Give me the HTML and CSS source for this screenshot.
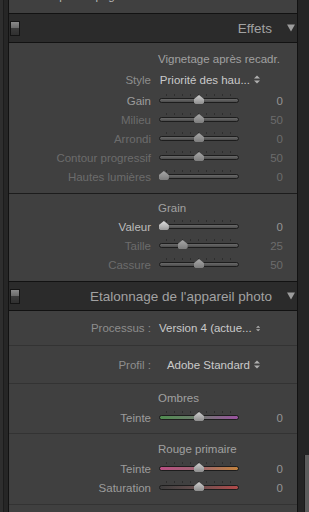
FILE: index.html
```
<!DOCTYPE html>
<html>
<head>
  <title>Développement</title>
  <link rel="stylesheet" href="styles.css">
</head>
<body>
  <div class="app">
    <div class="gutter-left"></div>

    <div class="column">
      <div class="panel panel-cut">
        <p class="cut-text">l'option Upright.</p>
      </div>

      <div class="header">
        <span class="toggle"></span>
        <span class="header-title">Effets</span>
        <svg class="caret" width="8" height="8" viewBox="0 0 8 8"><polygon points="0,0.5 8,0.5 4,7.5"/></svg>
      </div>

      <div class="panel">
        <div class="section sec-vignette">
          <div class="title">Vignetage après recadr.</div>
          <div class="row row-style">
            <span class="label">Style</span>
            <span class="popup">Priorité des hau...
              <svg width="6" height="9" viewBox="0 0 6 9"><polygon points="0,3.5 3,0.5 6,3.5"/><polygon points="0,5.5 3,8.5 6,5.5"/></svg>
            </span>
          </div>
          <div class="row">
            <span class="label">Gain</span>
            <span class="slider"><span class="thumb" style="left: 50%"></span></span>
            <span class="value">0</span>
          </div>
          <div class="row dim">
            <span class="label">Milieu</span>
            <span class="slider"><span class="thumb" style="left: 50%"></span></span>
            <span class="value">50</span>
          </div>
          <div class="row dim">
            <span class="label">Arrondi</span>
            <span class="slider"><span class="thumb" style="left: 50%"></span></span>
            <span class="value">0</span>
          </div>
          <div class="row dim">
            <span class="label">Contour progressif</span>
            <span class="slider"><span class="thumb" style="left: 50%"></span></span>
            <span class="value">50</span>
          </div>
          <div class="row dim">
            <span class="label">Hautes lumières</span>
            <span class="slider"><span class="thumb" style="left: 5%"></span></span>
            <span class="value">0</span>
          </div>
        </div>

        <div class="section sec-grain">
          <div class="title">Grain</div>
          <div class="row active">
            <span class="label">Valeur</span>
            <span class="slider"><span class="thumb" style="left: 5%"></span></span>
            <span class="value">0</span>
          </div>
          <div class="row dim">
            <span class="label">Taille</span>
            <span class="slider"><span class="thumb" style="left: 29%"></span></span>
            <span class="value">25</span>
          </div>
          <div class="row dim">
            <span class="label">Cassure</span>
            <span class="slider"><span class="thumb" style="left: 50%"></span></span>
            <span class="value">50</span>
          </div>
        </div>
      </div>

      <div class="header">
        <span class="toggle"></span>
        <span class="header-title">Etalonnage de l'appareil photo</span>
        <svg class="caret" width="8" height="8" viewBox="0 0 8 8"><polygon points="0,0.5 8,0.5 4,7.5"/></svg>
      </div>

      <div class="panel">
        <div class="section sec-process">
          <div class="row row-process">
            <span class="label">Processus :</span>
            <span class="popup">Version 4 (actue...
              <svg width="6" height="9" viewBox="0 0 6 9"><polygon points="0,3.5 3,0.5 6,3.5"/><polygon points="0,5.5 3,8.5 6,5.5"/></svg>
            </span>
          </div>
        </div>

        <div class="section sec-profile soft">
          <div class="row row-profile">
            <span class="label">Profil :</span>
            <span class="popup">Adobe Standard
              <svg width="6" height="9" viewBox="0 0 6 9"><polygon points="0,3.5 3,0.5 6,3.5"/><polygon points="0,5.5 3,8.5 6,5.5"/></svg>
            </span>
          </div>
        </div>

        <div class="section sec-shadows soft">
          <div class="title">Ombres</div>
          <div class="row">
            <span class="label">Teinte</span>
            <span class="slider track-green"><span class="thumb" style="left: 50%"></span></span>
            <span class="value">0</span>
          </div>
        </div>

        <div class="section sec-red soft">
          <div class="title">Rouge primaire</div>
          <div class="row">
            <span class="label">Teinte</span>
            <span class="slider track-hue-red"><span class="thumb" style="left: 50%"></span></span>
            <span class="value">0</span>
          </div>
          <div class="row">
            <span class="label">Saturation</span>
            <span class="slider track-sat-red"><span class="thumb" style="left: 50%"></span></span>
            <span class="value">0</span>
          </div>
        </div>

        <div class="section soft sec-rest"></div>
      </div>
    </div>

    <div class="gutter-right"><div class="scroll-thumb"></div></div>
  </div>
</body>
</html>
```
FILE: styles.css
```
* { box-sizing: border-box; }
body { margin: 0; background: #262626; font-family: "Liberation Sans", Arial, sans-serif; font-size: 11.5px; color: #9c9c9c; }
.app { display: flex; height: 512px; overflow: hidden; }
.gutter-left { width: 8px; background: linear-gradient(to right, #2e2e2e 0 3px, #1c1c1c 3px 4px, #262626 4px); }
.column { width: 290px; border-left: 1px solid #121212; border-right: 1px solid #121212; background: #2b2b2b; }
.gutter-right { width: 11px; display: flex; flex-direction: column; justify-content: flex-end; align-items: flex-end; background: #242424; }
.scroll-thumb { width: 5px; height: 57px; background: #5c5c5c; border-left: 1px solid #1a1a1a; }

/* panels */
.panel { background: #404040; border-top: 1px solid #121212; border-bottom: 1px solid #121212; }
.panel-cut { height: 14px; border-top: 0; overflow: hidden; }
.cut-text { margin: -11px 0 0 39px; line-height: 14px; color: #b8b8b8; }

/* headers */
.header { height: 28px; display: flex; align-items: center; padding: 0 2px 0 1px; }
.header-title { margin-left: auto; font-size: 13.5px; color: #a2a2a2; }
.caret { margin-left: 15px; fill: #9c9c9c; }
.toggle { width: 10px; height: 15px; border: 1px solid #141414; background: linear-gradient(#8a8a8a, #666 50%, #3a3a3a 50%, #303030); }

/* sections */
.section { padding: 0 14px 0 0; }
.section + .section { border-top: 1px solid #1c1c1c; }
.section.soft { border-top-color: #333; }
.sec-vignette { padding-top: 7px; padding-bottom: 7px; }
.sec-grain { padding-top: 5px; padding-bottom: 7px; }
.sec-shadows { padding-top: 5px; padding-bottom: 6px; }
.sec-red { padding-top: 6px; padding-bottom: 7px; }
.sec-rest { height: 20px; }
.title { height: 18px; line-height: 18px; padding-left: 149px; color: #a0a0a0; }
.sec-shadows .title, .sec-red .title { height: 19px; line-height: 19px; }

.row { display: grid; grid-template-columns: 142px 80px 1fr; column-gap: 8px; align-items: center; height: 19px; }
.row-style { height: 23px; }
.row-process { height: 34px; }
.row-profile { height: 37px; }
.label { text-align: right; white-space: nowrap; }
.value { text-align: right; color: #949494; }
.row.dim .label, .row.dim .value { color: #6c6c6c; }
.row.active .label { color: #bcbcbc; }
.row-style .label, .row-process .label, .row-profile .label { color: #8e8e8e; }

.popup { grid-column: 2 / 4; width: 101px; display: flex; justify-content: flex-end; align-items: center; gap: 4px; color: #cacaca; white-space: nowrap; }
.popup svg { fill: #b0b0b0; }

/* sliders */
.slider { position: relative; height: 5px; border: 1px solid #1d1d1d; border-radius: 3px; background: linear-gradient(#6a6a6a, #4c4c4c); }
.slider::before { content: ""; position: absolute; left: 6px; right: 6px; top: -5px; height: 2px; background: repeating-linear-gradient(to right, #2e2e2e 0 1px, transparent 1px 8px); }
.track-green { background: linear-gradient(to right, #4f8c4f, #6f7a6f 50%, #9a52a0); }
.track-hue-red { background: linear-gradient(to right, #b84e82, #9c6670 50%, #c2823e); }
.track-sat-red { background: linear-gradient(to right, #3e3e3e, #6a5050 50%, #b24a4a); }
.thumb { position: absolute; top: -4px; width: 10px; height: 9px; margin-left: -5px; background: linear-gradient(#cfcfcf, #8c8c8c); clip-path: polygon(50% 0, 100% 45%, 100% 85%, 85% 100%, 15% 100%, 0 85%, 0 45%); }
.row.dim .thumb { background: linear-gradient(#a8a8a8, #7c7c7c); }
.row.active .thumb { background: linear-gradient(#e0e0e0, #9a9a9a); }
```
